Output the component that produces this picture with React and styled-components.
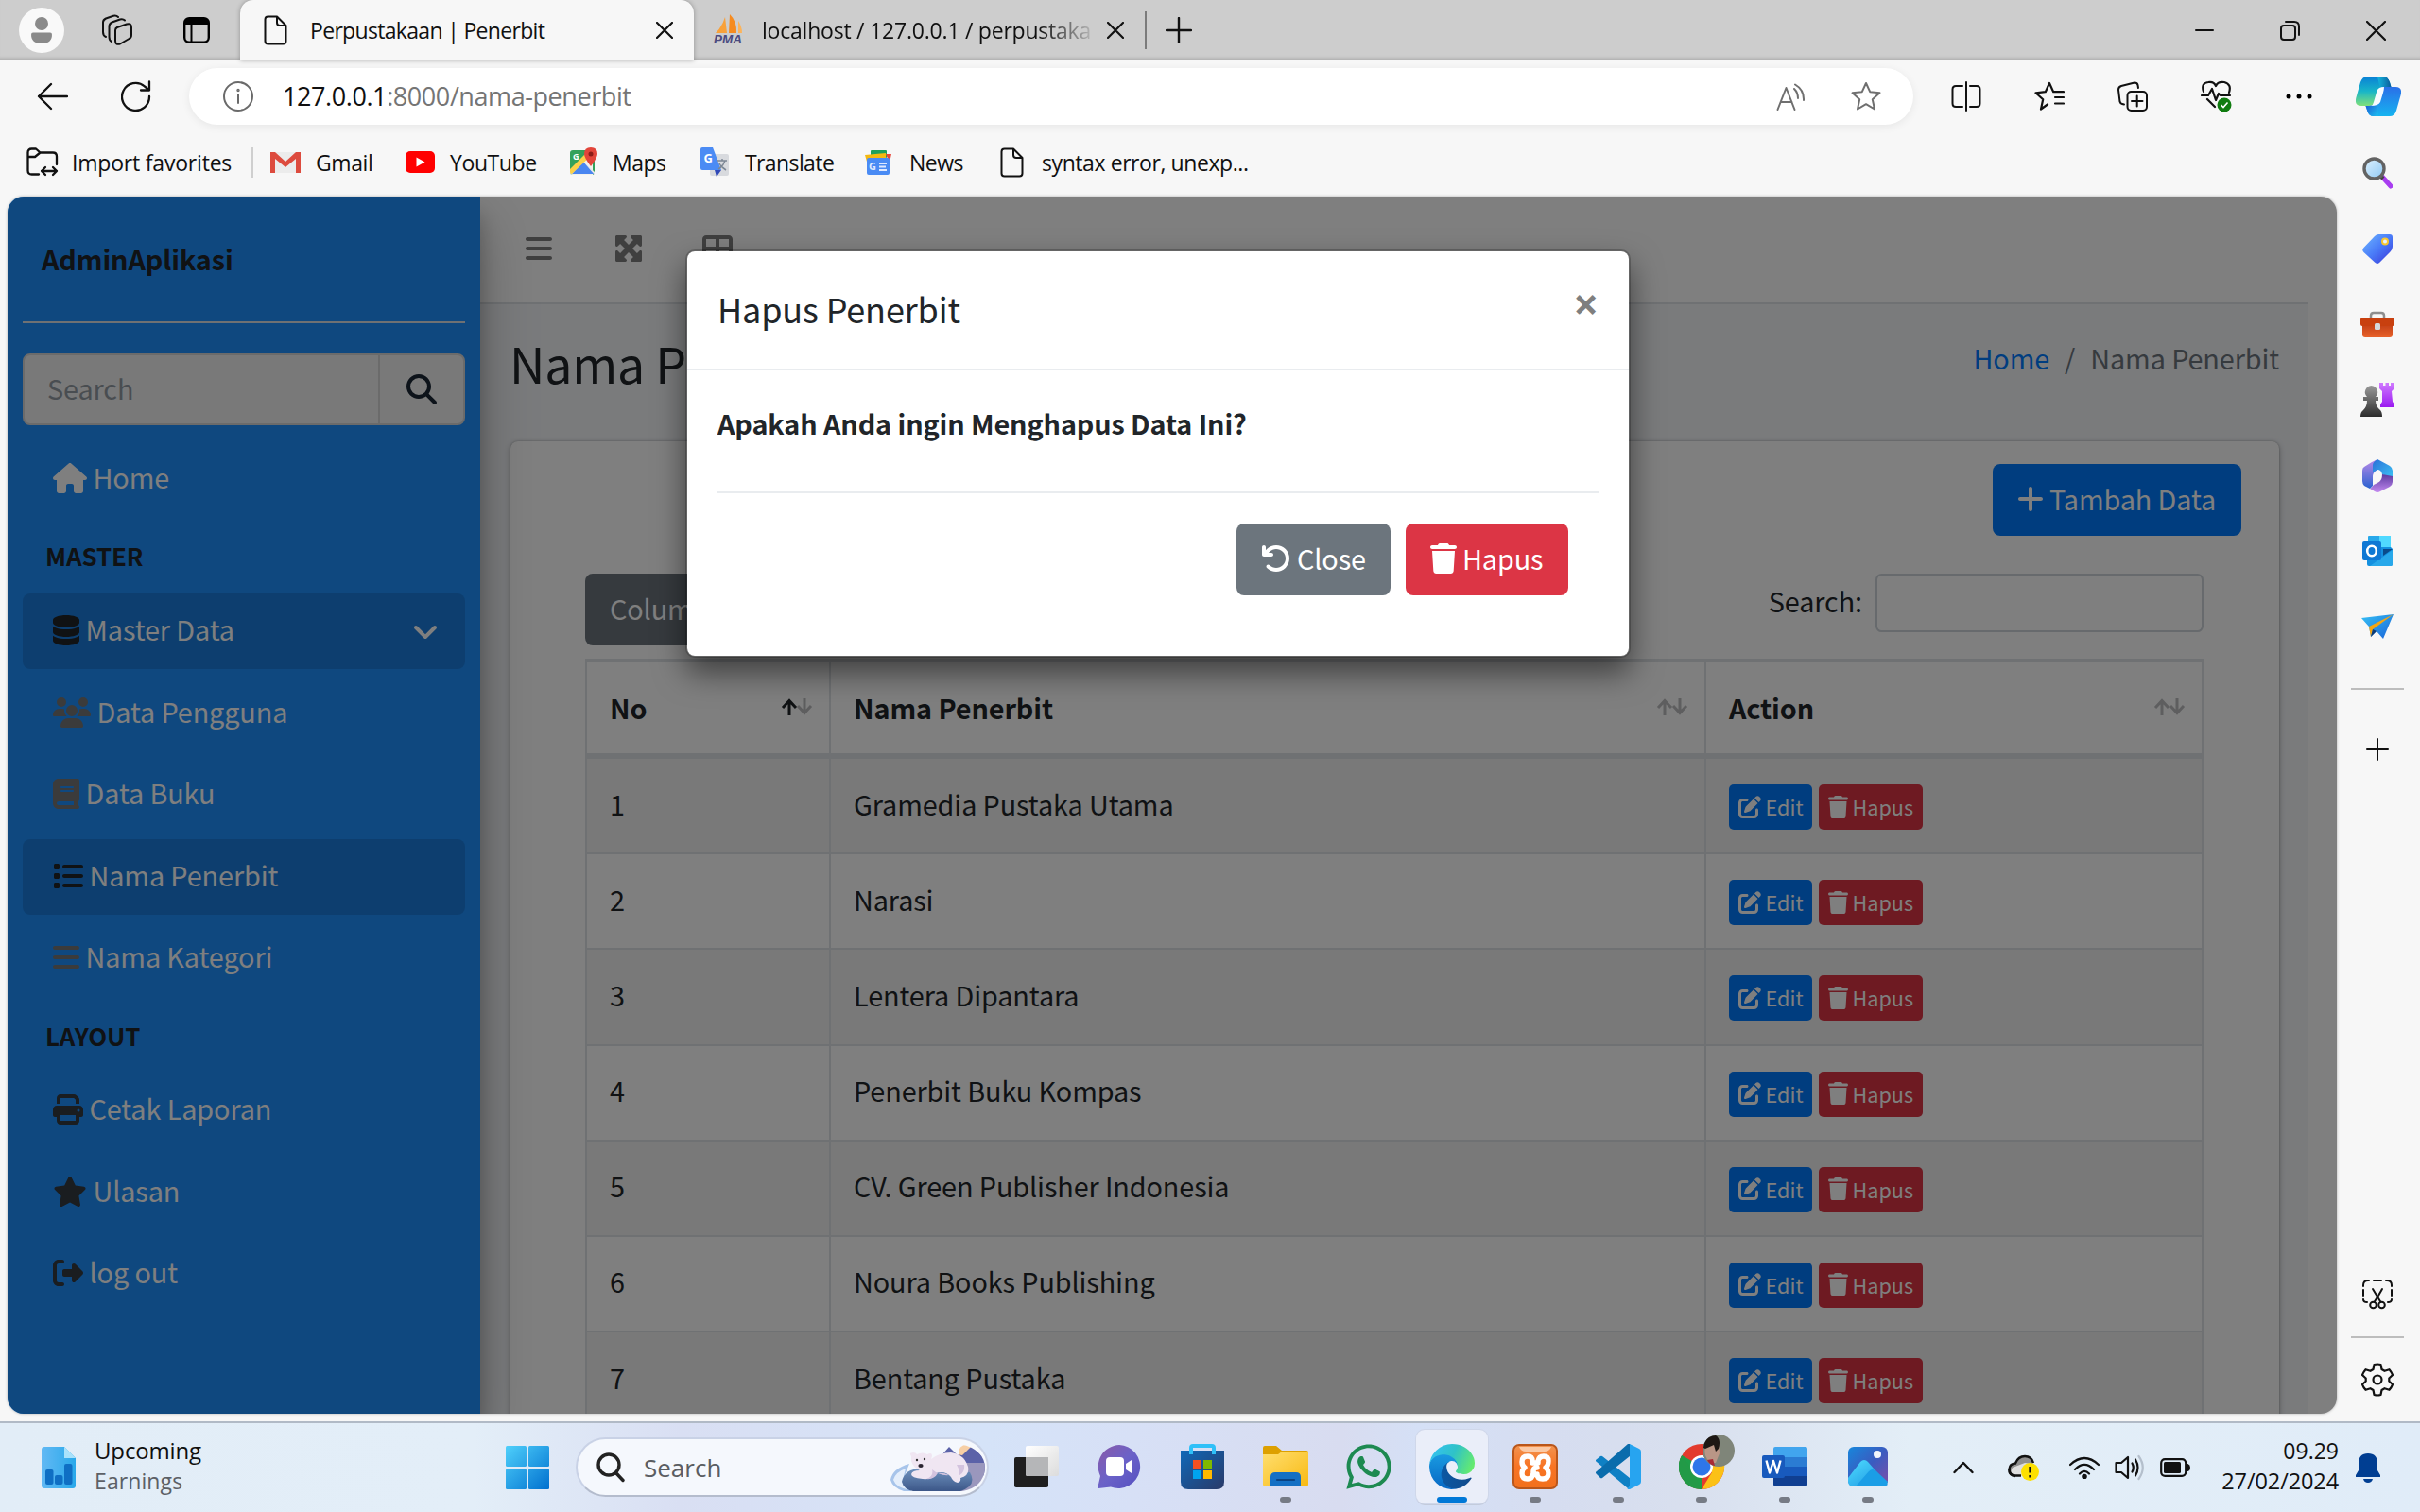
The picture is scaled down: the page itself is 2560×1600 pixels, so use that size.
import React from "react";
import styled, { createGlobalStyle, css } from "styled-components";
import {
  FaBars, FaMaximize, FaTableCellsLarge, FaMagnifyingGlass, FaHouse, FaDatabase, FaUsers, FaBook,
  FaList, FaPrint, FaStar, FaRightFromBracket, FaPlus, FaPenToSquare, FaTrash, FaArrowRotateLeft,
  FaAngleDown, FaWhatsapp,
} from "react-icons/fa6";

const Global = createGlobalStyle`
  *, *::before, *::after { box-sizing: border-box; }
  html, body { margin: 0; padding: 0; overflow: hidden; }
  svg { display: block; flex: none; }
`;

const uiFont = css`font-family: "Open Sans", "Noto Sans", sans-serif;`;
const pageFont = css`font-family: "Noto Sans CJK SC", "Noto Sans", sans-serif;`;

/* ---------- browser frame ---------- */

const Screen = styled.div`
  ${uiFont}
  width: 2560px;
  height: 1600px;
  display: flex;
  flex-direction: column;
  overflow: hidden;
  background: #f7f7f7;
  color: #000;
`;

const Label = styled.span`
  font-size: ${(p) => p.$size || 23}px;
  letter-spacing: ${(p) => p.$track || 0}px;
  color: ${(p) => p.$color || "#101010"};
  line-height: 32px;
  white-space: nowrap;
`;

const TabStrip = styled.div`
  height: 64px;
  flex: none;
  display: flex;
  align-items: center;
  background: #cdcdcd;
  box-shadow: inset 0 -5px 4px -4px rgba(0, 0, 0, 0.28);
`;

const StripTools = styled.div`
  width: 254px;
  display: flex;
  align-items: center;
  padding-left: 20px;
`;

const Avatar = styled.div`
  width: 48px;
  height: 48px;
  border-radius: 50%;
  background: #f9f9f9;
  display: flex;
  align-items: center;
  justify-content: center;
`;

const Spaced = styled.div`
  margin-left: ${(p) => p.$left}px;
  flex: none;
`;

const Tab = styled.div`
  height: 64px;
  width: ${(p) => p.$width}px;
  flex: none;
  display: flex;
  align-items: center;
  background: ${(p) => (p.$active ? "#f7f7f7" : "transparent")};
  border-radius: 14px 14px 0 0;
  padding: 0 22px 0 ${(p) => (p.$active ? 25 : 20)}px;
  box-shadow: ${(p) => (p.$active ? "0 0 5px rgba(0,0,0,.3)" : "none")};
`;

const TabTitle = styled.div`
  flex: 1;
  min-width: 0;
  margin-left: ${(p) => p.$left}px;
  display: flex;
  ${(p) => p.$fade && css`mask-image: linear-gradient(90deg, #000 80%, rgba(0, 0, 0, 0.15) 95%);`}
`;

const StripRule = styled.div`
  width: 2px;
  height: 40px;
  background: #7b7b7b;
  margin-right: 20px;
`;

const WindowButtons = styled.div`
  margin-left: auto;
  display: flex;
  align-items: center;
  gap: 70px;
  padding-right: 36px;
`;

const Toolbar = styled.div`
  height: 76px;
  flex: none;
  display: flex;
  align-items: center;
  padding-left: 39px;
`;

const AddressBar = styled.div`
  margin-left: 40px;
  width: 1824px;
  height: 60px;
  border-radius: 30px;
  background: #fff;
  box-shadow: 0 2px 10px rgba(0, 0, 0, 0.07);
  display: flex;
  align-items: center;
  padding: 0 34px 0 36px;
`;

const Path = styled.span`color: #757575;`;

const AddressActions = styled.div`
  margin-left: auto;
  display: flex;
  align-items: center;
  gap: 48px;
`;

const ToolbarIcons = styled.div`
  margin-left: 40px;
  display: flex;
  align-items: center;
  gap: 56px;
`;

const Body = styled.div`
  height: 1364px;
  flex: none;
  display: flex;
`;

const LeftPane = styled.div`
  width: 2472px;
  display: flex;
  flex-direction: column;
`;

const FavoritesBar = styled.div`
  height: 63px;
  margin-bottom: 1px;
  flex: none;
  display: flex;
  align-items: center;
  padding-left: 28px;
`;

const Favorite = styled.div`
  display: flex;
  align-items: center;
  gap: ${(p) => p.$gap}px;
  width: ${(p) => p.$width}px;
  flex: none;
`;

const FavRule = styled.div`
  width: 2px;
  height: 32px;
  background: #cfcfcf;
  margin-right: 18px;
`;

const EdgeRail = styled.div`
  width: 88px;
  padding: 3px 2px 14px 0;
  display: flex;
  flex-direction: column;
  align-items: center;
`;

const RailSlot = styled.div`
  height: ${(p) => p.$h || 80}px;
  display: flex;
  align-items: center;
  justify-content: center;
`;

const RailRule = styled.div`
  width: 56px;
  height: 2px;
  background: #bdbdbd;
  margin: ${(p) => p.$m || "25px 0 23px"};
`;

const Grow = styled.div`flex: 1;`;

/* ---------- web page ---------- */

const Viewport = styled.div`
  ${pageFont}
  position: relative;
  margin: 4px 0 0 8px;
  width: 2464px;
  height: 1288px;
  border-radius: 17px;
  overflow: hidden;
  display: flex;
  background: #fff;
  font-size: 28.8px;
  letter-spacing: -0.1px;
  color: #212529;
  box-shadow: 0 0 3px rgba(0, 0, 0, 0.3);
`;

const SideNav = styled.nav`
  width: 500px;
  flex: none;
  background: #1e90ff;
  padding: 0 16px;
  z-index: 1;
  box-shadow: 0 28px 56px rgba(0, 0, 0, 0.25), 0 20px 20px rgba(0, 0, 0, 0.22);
`;

const Brand = styled.div`
  height: 134px;
  border-bottom: 2px solid #dee2e6;
  padding: 42px 0 0 20px;
  line-height: 48px;
  font-weight: 700;
`;

const SearchForm = styled.div`
  height: 76px;
  margin: 32px 0 17px;
  display: flex;
  border: 2px solid #d6d6d6;
  border-radius: 8px;
  background: #f2f2f2;
`;

const SearchInput = styled.div`
  flex: 1;
  padding: 11px 0 0 24px;
  line-height: 48px;
  color: #939ba2;
`;

const SearchButton = styled.div`
  width: 90px;
  border-left: 2px solid #d6d6d6;
  display: flex;
  align-items: center;
  justify-content: center;
  color: #1a2634;
`;

const NavItem = styled.a`
  height: 80px;
  margin-bottom: 6.4px;
  padding: 0 30px 0 32px;
  border-radius: 8px;
  display: flex;
  align-items: center;
  color: #fff;
  background: ${(p) => (p.$active ? "rgba(0,0,0,.13)" : "transparent")};
`;

const NavIcon = styled.span`
  width: ${(p) => p.$w}px;
  margin-right: 6.5px;
  margin-bottom: 2px;
  color: ${(p) => p.$color};
  svg { width: ${(p) => p.$w}px; height: 32px; }
`;

const NavText = styled.span`
  line-height: 44px;
  padding-bottom: 4px;
  white-space: nowrap;
`;

const NavArrow = styled.span`
  margin-left: auto;
  margin-right: -4px;
`;

const NavHeader = styled.div`
  height: 75px;
  padding: ${(p) => p.$top}px 0 0 24px;
  font-size: 25.9px;
  line-height: 45px;
  font-weight: 700;
`;

const Main = styled.main`
  width: 1934px;
  flex: none;
  display: flex;
  flex-direction: column;
  background: #f4f6f9;
`;

const TopNav = styled.div`
  height: 114px;
  flex: none;
  display: flex;
  gap: 62.500px;
  padding: 39px 0 0 46px;
  background: #fff;
  border-bottom: 2px solid #dee2e6;
  color: #7f7f7f;
`;

const TopIcon = styled.span`
  width: 32px;
  height: 32px;
  display: flex;
  justify-content: center;
`;

const PageHeader = styled.div`
  height: 145px;
  flex: none;
  display: flex;
  justify-content: space-between;
  padding: 0 31px;
`;

const Heading = styled.h1`
  margin: 24px 0 0;
  font-size: 51.8px;
  font-weight: 400;
  letter-spacing: -0.2px;
  line-height: 76px;
`;

const Breadcrumb = styled.div`
  margin-top: 33px;
  display: flex;
  gap: 16px;
  line-height: 48px;
  color: #6c757d;
`;

const Crumb = styled.a`color: #007bff;`;

const Card = styled.section`
  margin: 0 31px 0 32px;
  flex: 1;
  padding: 24px 40px 0;
  background: #fff;
  border-radius: 8px 8px 0 0;
  box-shadow: 0 0 2px rgba(0, 0, 0, 0.25), 0 2px 6px rgba(0, 0, 0, 0.3);
`;

const CardTools = styled.div`
  display: flex;
  justify-content: flex-end;
  margin-bottom: 40px;
`;

const tones = { primary: "#007bff", danger: "#dc3545", secondary: "#6c757d" };

const Button = styled.button`
  height: 76px;
  width: ${(p) => p.$width}px;
  padding: 0 0 0 26px;
  border: 0;
  border-radius: 8px;
  background: ${(p) => tones[p.$tone]};
  color: #fff;
  font: inherit;
  letter-spacing: inherit;
  display: flex;
  align-items: center;
  svg { width: ${(p) => p.$icon}px; height: 32px; margin: 0 6px 2px 0; }
`;

const ButtonText = styled.span`
  line-height: 45px;
  padding-bottom: 3px;
  white-space: nowrap;
`;

const TableArea = styled.div`padding: 0 40px 0 39px;`;

const TableTools = styled.div`
  height: 90px;
  display: flex;
  justify-content: space-between;
`;

const Filter = styled.label`
  display: flex;
  gap: 14px;
  line-height: 48px;
`;

const FilterText = styled.span`padding-top: 5px;`;

const FilterInput = styled.span`
  width: 347px;
  height: 62px;
  border: 2px solid #ced4da;
  border-radius: 6.4px;
`;

const Grid = styled.div`
  border: 2px solid #dee2e6;
  border-top-width: 4px;
  border-bottom: 0;
`;

const Row = styled.div`
  display: grid;
  grid-template-columns: 258px 926px 1fr;
  height: ${(p) => (p.$head ? 102 : 101.2)}px;
  border-bottom: ${(p) => (p.$head ? 6 : 2)}px solid #dee2e6;
  background: ${(p) => (p.$odd ? "#f2f2f2" : "#fff")};
  font-weight: ${(p) => (p.$head ? 700 : 400)};
`;

const Cell = styled.div`
  padding: ${(p) => p.$top || 23.500}px 8px 0 24px;
  line-height: 48px;
  display: flex;
  justify-content: ${(p) => (p.$between ? "space-between" : "flex-start")};
  gap: 7px;
  border-right: 2px solid #dee2e6;
  &:last-child { border-right: 0; }
`;

const SortMark = styled.span`padding: 14.500px 9px 0 0;`;

const SmallButton = styled.button`
  height: 48px;
  width: ${(p) => p.$width}px;
  border: 0;
  border-radius: 5px;
  padding: 0 0 0 9.600px;
  background: ${(p) => tones[p.$tone]};
  color: #fff;
  font: inherit;
  font-size: 21.6px;
  letter-spacing: 0;
  display: flex;
  align-items: center;
  gap: 5px;
  svg { width: ${(p) => p.$icon}px; height: 24px; margin-bottom: 1px; }
`;

const SmallText = styled.span`
  line-height: 33px;
  padding-bottom: 1px;
`;

const Backdrop = styled.div`
  position: absolute;
  inset: 0;
  z-index: 2;
  background: rgba(0, 0, 0, 0.5);
  display: flex;
  align-items: flex-start;
  justify-content: center;
  padding: 56px 30px 0 0;
`;

const Dialog = styled.div`
  width: 1000px;
  height: 432px;
  background: #fff;
  background-clip: padding-box;
  border: 2px solid rgba(0, 0, 0, 0.2);
  border-radius: 10px;
  box-shadow: 0 16px 32px rgba(0, 0, 0, 0.5);
`;

const DialogHead = styled.div`
  height: 126px;
  padding: 30px 32px 0;
  border-bottom: 2px solid #e9ecef;
  display: flex;
  justify-content: space-between;
`;

const DialogTitle = styled.h4`
  margin: 0;
  font-size: 36px;
  font-weight: 400;
  letter-spacing: -0.15px;
  line-height: 60px;
`;

const Dismiss = styled.span`
  ${uiFont}
  font-size: 47px;
  font-weight: 700;
  line-height: 48px;
  padding-top: 1px;
  color: #7f7f7f;
`;

const DialogBody = styled.div`padding: 32px 32px 0;`;

const Question = styled.p`
  margin: 0 0 48px;
  font-weight: 700;
  line-height: 48px;
`;

const DialogActions = styled.div`
  border-top: 2px solid #e9ecef;
  padding: 32px 32px 0 0;
  display: flex;
  justify-content: flex-end;
  gap: 16px;
`;

/* ---------- taskbar ---------- */

const Taskbar = styled.footer`
  height: 96px;
  flex: none;
  border-top: 2px solid #b1bac6;
  display: flex;
  align-items: center;
  background: linear-gradient(90deg, #e2edf7 0, #e3eef8 500px, #d9dff3 720px, #d5e3f8 1040px, #d7e0f6 1200px, #d8dcf0 1420px, #d5e0f6 1500px, #d6ddf0 1640px, #d8dfee 1780px, #e3eef7 2020px, #e0ecf8 2560px);
`;

const Widget = styled.div`
  width: 535px;
  padding-left: 44px;
  display: flex;
  align-items: center;
  gap: 20px;
`;

const Lines = styled.div`
  display: flex;
  flex-direction: column;
  align-items: ${(p) => (p.$end ? "flex-end" : "flex-start")};
  width: ${(p) => (p.$w ? p.$w + "px" : "auto")};
  margin-top: -4px;
`;

const TaskSearch = styled.div`
  margin: 0 6px 0 28px;
  width: 437px;
  height: 63px;
  margin-top: -1px;
  border-radius: 32px;
  border: 2px solid #c9d2e6;
  border-bottom-color: #b4bccd;
  background: #f5f8fd;
  display: flex;
  align-items: center;
  gap: 20px;
  padding: 0 0 0 20px;
`;

const AppSlot = styled.div`
  width: 88px;
  height: 94px;
  flex: none;
  display: flex;
  align-items: center;
  justify-content: center;
`;

const AppTile = styled.div`
  position: relative;
  width: 76px;
  height: 78px;
  margin-bottom: 2px;
  border-radius: 9px;
  display: flex;
  align-items: center;
  justify-content: center;
  background: ${(p) => (p.$active ? "#eaeef9" : "transparent")};
  box-shadow: ${(p) => (p.$active ? "0 0 0 1px #cfd7ea, 0 2px 0 #c3cbdc" : "none")};
`;

const RunMark = styled.i`
  position: absolute;
  bottom: 1px;
  width: ${(p) => (p.$wide ? 32 : 12)}px;
  height: 6px;
  border-radius: 3px;
  background: ${(p) => (p.$wide ? "#0078d7" : "#767b85")};
`;

const ChromeShift = styled.div`margin: -10px 0 0 11px;`;

const Tray = styled.div`
  margin-left: 46px;
  display: flex;
  align-items: center;
`;

/* ---------- drawings ---------- */

const Line = ({ w = 32, h = 32, c = "#111", sw = 2, children }) => (
  <svg width={w} height={h} viewBox={`0 0 ${w} ${h}`} fill="none" stroke={c} strokeWidth={sw} strokeLinecap="round" strokeLinejoin="round">{children}</svg>
);
const Solid = ({ w = 48, h = 48, box, children }) => (
  <svg width={w} height={h} viewBox={box || `0 0 ${w} ${h}`}>{children}</svg>
);
const Lin = ({ id, a, b, m, x2 = 1, y2 = 1 }) => (
  <linearGradient id={id} x1="0" y1="0" x2={x2} y2={y2}>
    <stop offset="0" stopColor={a} />
    {m && <stop offset=".5" stopColor={m} />}
    <stop offset="1" stopColor={b} />
  </linearGradient>
);

const DocIcon = () => <Line w={25} h={32}><path d="M4.500 1.500H14L23.500 11V27.500Q23.500 30.500 20.500 30.500H4.500Q1.500 30.500 1.500 27.500V4.500Q1.500 1.500 4.500 1.500ZM14 1.500V8Q14 11 17 11H23.500" /></Line>;
const CloseIcon = ({ s = 18, sw = 2.200 }) => <Line w={s} h={s} sw={sw}><path d={`M1 1L${s - 1} ${s - 1}M${s - 1} 1L1 ${s - 1}`} /></Line>;
const PersonIcon = () => <Solid w={24} h={28}><circle cx="12" cy="7" r="7" fill="#8a8a8a" /><path d="M1 18.500Q1 16.500 3 16.500H21Q23 16.500 23 18.500Q23 28 12 28Q1 28 1 18.500Z" fill="#8a8a8a" /></Solid>;
const WorkspacesIcon = () => (
  <Line w={34} h={34}>
    <path d="M17 14L27 10.500Q32 9 32 14V22Q32 25 29.500 26L20 31.500Q15 33 15 28V17Q15 15 17 14Z" />
    <path d="M11 29Q8.500 28 8.500 24V13Q8.500 10 11.500 8.500L20 5.500Q23 4.500 25 6.500" />
    <path d="M5 24Q2 23 2 19V8.500Q2 6 5 4.500L13 1.800Q16 1 18 3" />
  </Line>
);
const PanesIcon = () => <Solid w={28} h={28}><rect x="1.200" y="1.200" width="25.600" height="25.600" rx="5" fill="none" stroke="#000" strokeWidth="2.400" /><path d="M1 8V6Q1 1 6 1H22Q27 1 27 6V8Z" /><path d="M8.500 8V27" stroke="#000" strokeWidth="2" /></Solid>;
const PmaIcon = () => (
  <Solid w={34} h={34}>
    <path d="M13 3L15 20H3Q10 13 13 3Z" fill="#f8a13a" /><path d="M18 0Q26 8 25 20H17Z" fill="#f68b1f" /><path d="M27 7Q31 13 31 20H27Z" fill="#fbb45c" />
    <text x="1" y="31" fontFamily="Liberation Sans" fontWeight="700" fontStyle="italic" fontSize="12" textLength="30" lengthAdjust="spacingAndGlyphs" fill="#4a4a80">PMA</text>
  </Solid>
);
const BackIcon = () => <Line w={33} h={30} sw={2.300}><path d="M32 15H2M15 2L2 15L15 28" /></Line>;
const ReloadIcon = () => <Line w={32} h={34} sw={2.300}><path d="M30 17A14.500 14.500 0 1 1 25 6.500L29.500 10M30 1.500V10.500H21" /></Line>;
const InfoIcon = () => <Line w={32} h={32} c="#6a6a6a"><circle cx="16" cy="16" r="15" /><path d="M16 14V23" /><circle cx="16" cy="9.500" r=".7" /></Line>;
const ReadIcon = () => <Line w={31} h={29} c="#6f6f6f"><path d="M1.500 28L10.500 5L19.500 28M5 20H16.500M19 6Q23 10 23 16M20 1.500Q29.500 7 29 18" /></Line>;
const starPath = "M16 2L20.200 11.200L30.500 12.300L22.800 19.200L25 29.500L16 24.200L7 29.500L9.200 19.200L1.500 12.300L11.800 11.200Z";
const StarIcon = () => <Line c="#6f6f6f"><path d={starPath} /></Line>;
const SplitIcon = () => <Line w={32} h={32}><path d="M12 5H5Q1.500 5 1.500 8.500V23.500Q1.500 27 5 27H12M20 5H27Q30.500 5 30.500 8.500V23.500Q30.500 27 27 27H20M16 1V31" /></Line>;
const FavIcon = () => <Line sw={2.200}><path d="M14 24.500L7 29.500L9.200 19.200L1.500 12.300L11.800 11.200L16 2L20.200 11.200H31M22 17H31M22 23.500H31" /></Line>;
const CollectIcon = () => <Line><path d="M7 24.500L5 24Q3 23.500 2.500 21.500L1 9Q1 6 4 5L18 1.500Q21 1.500 21.500 4L22 7" /><rect x="10.500" y="11" width="20.500" height="20" rx="4" /><path d="M20.700 15.500V26.500M15 21H26.500" /></Line>;
const HealthIcon = () => (
  <Solid w={34} h={34}>
    <path d="M3 12Q0 3 8 2Q14 1 16 6Q18 1 25 2Q33 4 30 13M1 16H8L12 9L16 21L19 14L21 16H31M7 20L15 28" fill="none" stroke="#111" strokeWidth="2.200" strokeLinejoin="round" strokeLinecap="round" />
    <circle cx="25" cy="26" r="7.500" fill="#107c10" /><path d="M21.500 26L24 28.500L28.500 23.500" fill="none" stroke="#fff" strokeWidth="1.600" />
  </Solid>
);
const DotsIcon = () => <Solid w={28} h={6}><circle cx="3" cy="3" r="2.500" /><circle cx="14" cy="3" r="2.500" /><circle cx="25" cy="3" r="2.500" /></Solid>;
const CopilotIcon = () => (
  <Solid w={48} h={42}>
    <defs><Lin id="cpA" a="#0a7fd6" m="#18b5c8" b="#7fe07a" x2={0} /><Lin id="cpB" a="#2a6fe8" b="#16b4f0" x2={0} /><Lin id="cpC" a="#1a4bd0" b="#1cc0f0" /><Lin id="cpD" a="#14b8e0" b="#0a5a9a" x2={1} y2={0} /></defs>
    <path d="M12 0H29Q34 0 36 6L37.500 11H30Q25 11 23.500 16L20 28Q18.500 31 14 31H6Q-2 31 .5 22L5 6Q7 0 12 0Z" fill="url(#cpA)" />
    <path d="M23 0H29Q34 0 36 6L37.500 11H30Q27 11 26 13Z" fill="url(#cpD)" />
    <path d="M36 42H19Q14 42 12.500 37L10.500 31H14Q18.500 31 20 28L24.500 16Q26 11 30 11H42Q50 11 47.500 20L43 36Q41 42 36 42Z" fill="url(#cpB)" />
    <path d="M10.500 31H14Q18.500 31 20 28L21 25Q25 36 23 42H19Q14 42 12.500 37Z" fill="url(#cpC)" />
    <path d="M19 27L22.500 15Q24 11 30 11Q30 13 29 17L26 27Q24 31 16 31Q18.500 30 19 27Z" fill="#f7fbff" />
  </Solid>
);
const ImportIcon = () => <Line w={34} h={32} sw={2.300}><path d="M13 28.500H5.500Q1.500 28.500 1.500 24.500V5.500Q1.500 1.500 5.500 1.500H10L14.500 5.500H28Q32 5.500 32 9.500V18M1.500 10H9L14.500 5.500M16 25H32M20 21L16 25L20 29M28 21L32 25L28 29" /></Line>;
const GmailIcon = () => <Solid w={32} h={24}><rect x="1" y="1" width="30" height="22" fill="#ececec" /><path d="M0 23V1H5L16 11L27 1H32V23H27V8L16 17L5 8V23Z" fill="#dd4b3e" /></Solid>;
const YoutubeIcon = () => <Solid w={31} h={23}><rect width="31" height="23" rx="5" fill="#f00" /><path d="M11.500 6.500L20.500 11.500L11.500 16.500Z" fill="#fff" /></Solid>;
const MapsIcon = () => (
  <Solid w={31} h={31}>
    <rect x="1" y="3" width="26" height="26" rx="3" fill="#34a15a" /><path d="M1 26L25 3V29H4Q1 29 1 26Z" fill="#f3f1ec" /><path d="M3 28L15 15L27 28Z" fill="#4a86f0" /><path d="M1 23L20 4L24 8L3 28Q1 28 1 26Z" fill="#fbd04a" /><path d="M15 15L27 26V29Z" fill="#e8e8e8" />
    <path d="M23 0Q30 0 30 7Q30 11 23 20Q16 11 16 7Q16 0 23 0Z" fill="#e2453a" /><circle cx="23" cy="7" r="2.500" fill="#8c1d18" /><text x="4" y="13" fontSize="9" fontFamily="Open Sans" fontWeight="700" fill="#fff">G</text>
  </Solid>
);
const TranslateIcon = () => (
  <Solid w={31} h={31}>
    <rect x="10" y="7" width="20" height="23" rx="2" fill="#d8dade" /><path d="M15 24H22L17 31Z" fill="#3049b8" /><path d="M2 0H13L22 24H2Q0 24 0 22V2Q0 0 2 0Z" fill="#4b8bf4" />
    <text x="3.500" y="16" fontSize="13" fontFamily="Open Sans" fontWeight="700" fill="#fff">G</text><path d="M18 14H28M23 12V14M26 14Q24 20 19 23M20 17Q22 21 27 24" stroke="#7c8794" strokeWidth="1.500" fill="none" />
  </Solid>
);
const NewsIcon = () => (
  <Solid w={29} h={26}>
    <rect x="6" y="0" width="17" height="8" rx="1" fill="#1fa05a" /><path d="M0 5L22 3V8L2 12Z" fill="#f5b912" /><path d="M22 4H28L26 13Z" fill="#e8463a" /><rect x="2" y="8" width="24" height="18" rx="2" fill="#4a8bf4" />
    <text x="4" y="21" fontSize="11" fontFamily="Open Sans" fontWeight="700" fill="#dfe9ff">G</text><path d="M15 14H23M15 17.500H22M15 21H23" stroke="#dfe9ff" strokeWidth="1.800" />
  </Solid>
);

const RailSearch = () => <Solid w={32} h={34}><defs><Lin id="rs" a="#dff2ff" b="#8ec8f4" /></defs><path d="M21 21L30 31" stroke="#a83df0" strokeWidth="5" strokeLinecap="round" /><path d="M18 19L22 23" stroke="#444" strokeWidth="4" /><circle cx="12.500" cy="12.500" r="10.500" fill="url(#rs)" stroke="#636363" strokeWidth="3.400" /></Solid>;
const RailTag = () => <Solid w={32} h={32}><defs><Lin id="rt" a="#6fb8ff" m="#4a7cf8" b="#3a35d8" /></defs><path d="M17 1H29Q32 1 32 4V14Q32 17 29.500 19.500L18 31Q15.500 33 13 30.500L1.500 20Q-1 17.500 1.500 15L13 3Q15 1 17 1Z" fill="url(#rt)" /><circle cx="24" cy="8.500" r="3" fill="#e8f0ff" stroke="#f8c62c" strokeWidth="2" /></Solid>;
const RailToolbox = () => <Solid w={36} h={28}><defs><Lin id="rb" a="#b5330f" b="#e8622a" x2={0} /></defs><path d="M11 9V5Q11 2 14 2H22Q25 2 25 5V9" fill="none" stroke="#8e8e8e" strokeWidth="2.500" /><rect x="2" y="9" width="32" height="19" rx="3" fill="url(#rb)" /><path d="M2 7H34Q36 7 36 9V14Q36 16 34 16H2Q0 16 0 14V9Q0 7 2 7Z" fill="#c8400f" /><rect x="15" y="13" width="6" height="7" rx="1.500" fill="#d4d9dd" /></Solid>;
const RailChess = () => (
  <Solid w={36} h={36}>
    <defs><Lin id="c1" a="#9a9a9a" b="#2c2c2c" x2={0} /><Lin id="c2" a="#d07bff" b="#9a1af0" x2={0} /></defs>
    <path d="M20 0H24V3H26.500V0H30V3H32V0H36V6L33 9L34 20L36 23V26H21V23L23 20V9L20 6Z" fill="url(#c2)" />
    <path d="M11.500 3A7 7 0 0 1 16 15H19V19H16Q16 25 21 29Q23 31 23 36H0Q0 31 3 29Q7 25 7 19H3V15H7A7 7 0 0 1 11.500 3Z" fill="url(#c1)" />
  </Solid>
);
const RailM365 = () => (
  <Solid w={32} h={35}>
    <defs><Lin id="m1" a="#b98ae8" b="#2a62d0" x2={0} /><Lin id="m2" a="#2a6fd8" b="#3cc4f4" /><Lin id="m3" a="#5a3aa0" b="#c48af0" x2={0} /></defs>
    <path d="M10 3L16 0V11Q11 14 11 18V28L8 31L2 28Q0 26 0 23V12Q0 9 2 8Z" fill="url(#m1)" /><path d="M16 0L29 7Q32 9 32 12V21L21 16Q20 11 16 11L11 14V6Q11 3 16 0Z" fill="url(#m2)" /><path d="M32 18V24Q32 27 29 29L19 34Q16 36 13 34L8 31Q10 30 12 27L16 25Q21 23 21 16Z" fill="url(#m3)" />
  </Solid>
);
const RailOutlook = () => <Solid w={32} h={32}><rect x="6" y="0" width="24" height="16" rx="1" fill="#28a8ea" /><rect x="18" y="0" width="12" height="14" fill="#50d9ff" /><path d="M5 12H30L32 14V30Q32 32 30 32H7Q5 32 5 30Z" fill="#1490df" /><path d="M32 15L8 32H30Q32 32 32 30Z" fill="#28a8ea" /><path d="M32 14L22 21V14Z" fill="#0a4a8a" /><rect x="0" y="6" width="20" height="20" rx="2" fill="#0f78d4" /><ellipse cx="10" cy="16" rx="4.800" ry="5.200" fill="none" stroke="#fff" strokeWidth="2.600" /></Solid>;
const RailPlane = () => <Solid w={34} h={26}><defs><Lin id="rp" a="#35c0f5" b="#1a63d8" /></defs><path d="M0 4L34 0L23 26L16 18L10 24L8 13Z" fill="url(#rp)" /><path d="M8 13L34 0L12 16L10 24Z" fill="#f5a613" /><path d="M12 16L16 18L10 24Z" fill="#0c3b78" /></Solid>;
const PlusIcon = ({ s = 24, sw = 2 }) => <Line w={s} h={s} sw={sw}><path d={`M${s / 2} 1V${s - 1}M1 ${s / 2}H${s - 1}`} /></Line>;
const SnipIcon = () => <Line w={32} h={32} sw={2}><path d="M1 7V6Q1 1 6 1H7M12 1H20M25 1H26Q31 1 31 6V7M31 11V17M1 11V17M31 21Q31 24 27 24M1 21Q1 24 5 24" /><path d="M11 10L19.500 24M21 10L17 17L12.500 24" /><circle cx="11.500" cy="27" r="3.300" /><circle cx="20.500" cy="27" r="3.300" /></Line>;
const GearIcon = () => <Line w={34} h={36} sw={2.200}><path d="M13.500 2Q17 1 20.500 2L21.500 7L24.500 8.800L29.500 7.200Q32 10 33 13L29.300 16.500V19.500L33 23Q32 26 29.500 28.800L24.500 27.200L21.500 29L20.500 34Q17 35 13.500 34L12.500 29L9.500 27.200L4.500 28.800Q2 26 1 23L4.700 19.500V16.500L1 13Q2 10 4.500 7.200L9.500 8.800L12.500 7Z" /><circle cx="17" cy="18" r="4.500" /></Line>;
const SortIcon = ({ up }) => (
  <svg width="34" height="18" viewBox="0 0 34 18" fill="none" strokeWidth="3">
    <path d="M9 18V2.500M2 10L9 2.500L16 10" stroke={up ? "#212529" : "#bcbdbf"} /><path d="M25 0V15.500M18 8L25 15.500L32 8" stroke="#bcbdbf" />
  </svg>
);

const ReportIcon = () => <Solid w={36} h={44}><defs><Lin id="rep" a="#62b9f4" b="#29a8ea" y2={0} /></defs><path d="M3 0H24L36 12V41Q36 44 33 44H3Q0 44 0 41V3Q0 0 3 0Z" fill="url(#rep)" /><path d="M24 0L36 12H24Z" fill="#a9e2fb" /><rect x="4" y="24" width="8.500" height="16" rx="2" fill="#0f6fc4" /><rect x="14" y="30" width="8.500" height="10" rx="2" fill="#0f6fc4" /><rect x="24" y="18" width="8.500" height="22" rx="2" fill="#0f6fc4" /></Solid>;
const StartIcon = () => <Solid w={46} h={46}><defs><linearGradient id="st" gradientUnits="userSpaceOnUse" x1="0" y1="0" x2="46" y2="46"><stop offset="0" stopColor="#4fd0fb" /><stop offset="1" stopColor="#0070cf" /></linearGradient></defs>{[[0, 0], [24, 0], [0, 24], [24, 24]].map(([x, y]) => <rect key={x + "-" + y} x={x} y={y} width="22" height="22" rx="1.500" fill="url(#st)" />)}</Solid>;
const FindIcon = () => <Line w={30} h={32} c="#222" sw={3.400}><circle cx="13" cy="13" r="11" /><path d="M21 22L28 29.500" /></Line>;
const BearIcon = () => (
  <Solid w={102} h={50}>
    <defs><Lin id="bw" a="#6f93bf" b="#3c5788" x2={0} /><clipPath id="bc"><path d="M0 0H74Q100 6 100 26Q98 46 76 50H0Z" /></clipPath></defs>
    <g clipPath="url(#bc)">
      <circle cx="80" cy="9" r="8" fill="#f7cfa5" /><path d="M46 22L54 12L62 3L70 11L76 12L86 2L102 18V34H46Z" fill="#5b62a8" /><path d="M66 20H102V50H60Z" fill="#9a97bd" />
      <path d="M0 38Q2 26 20 21L14 36L22 50H14Q2 46 0 38Z" fill="#a7c4ea" /><path d="M3 38Q5 30 16 26L13 38L18 48Q6 46 3 38Z" fill="#e4eefb" /><path d="M12 40Q15 26 32 26L84 30Q92 44 74 50H24Q14 48 12 40Z" fill="url(#bw)" />
    </g>
    <path d="M22 13Q19 9 24 9Q27 9 28 11Q34 8 39 11Q44 8 44 13L43 16Q52 9 64 9Q78 11 82 24Q84 34 74 36Q75 40 71 41Q66 40 64 35Q58 28 48 31Q46 38 34 37Q22 36 22 32Q23 28 31 28Q24 25 22 18Z" fill="#f0e6f2" />
    <path d="M44 27Q52 34 62 33Q56 30 50 31Q46 38 38 37Q46 34 44 27ZM70 22Q74 28 72 34Q79 30 78 22Z" fill="#d3c3de" /><circle cx="28" cy="17" r="1.200" fill="#333" /><circle cx="36" cy="16" r="1.200" fill="#333" /><ellipse cx="32" cy="23" rx="2.600" ry="1.900" fill="#2a2430" />
  </Solid>
);
const TaskViewIcon = () => <Solid w={47} h={45}><defs><Lin id="tv" a="#fff" b="#dcdcdc" /></defs><rect x="0" y="12" width="36" height="32" rx="2" fill="#1f1f1f" /><rect x="12" y="0" width="35" height="32" rx="2" fill="url(#tv)" /><path d="M12 12H36V32H14Q12 32 12 30Z" fill="#b5b6b8" /></Solid>;
const ChatIcon = () => <Solid w={46} h={46}><defs><Lin id="ch" a="#8a5aa8" m="#6b62c8" b="#5550c0" /></defs><path d="M23 0A23 23 0 1 1 14 44.500L1 46Q0 46 .5 44L3 33A23 23 0 0 1 23 0Z" fill="url(#ch)" /><rect x="9" y="13" width="19" height="20" rx="4" fill="#fff" /><path d="M30 20L36 16V30L30 26Z" fill="#fff" /></Solid>;
const StoreIcon = () => <Solid w={46} h={48}><defs><Lin id="sto" a="#0f68b8" b="#2a3a68" /></defs><path d="M0 7H46V40Q46 48 38 48H8Q0 48 0 40Z" fill="url(#sto)" /><path d="M11 11V4Q11 2 13 2H33Q35 2 35 4V11" fill="none" stroke="#2fc0f8" strokeWidth="4" /><path d="M13 17H22V26H13Z" fill="#f25022" /><path d="M24 17H33V26H24Z" fill="#7fba00" /><path d="M13 28H22V37H13Z" fill="#00a4ef" /><path d="M24 28H33V37H24Z" fill="#ffb900" /></Solid>;
const FolderIcon = () => <Solid w={48} h={44}><defs><Lin id="fo" a="#ffdf70" b="#f8b912" /></defs><path d="M0 2Q0 0 2 0H14L20 5H46Q48 5 48 7V12H0Z" fill="#dda000" /><path d="M0 9H16L20 6H47Q48 6 48 8V41Q48 43 46 43H2Q0 43 0 41Z" fill="url(#fo)" /><path d="M8 43V33Q8 28 13 28H35Q40 28 40 33V43Z" fill="#1470c4" /><path d="M15 36H33" stroke="#0a4484" strokeWidth="2.200" strokeLinecap="round" /></Solid>;
const EdgeIcon = () => (
  <Solid w={48} h={48} box="0 0 256 256">
    <defs><Lin id="e1" a="#0c59a4" b="#114a8b" y2={0} /><Lin id="e2" a="#1b9de2" b="#0667c4" x2={0} /><linearGradient id="e3" x1="0" y1=".3" x2="1" y2=".6"><stop offset="0" stopColor="#35c1f1" /><stop offset=".5" stopColor="#2fc2c8" /><stop offset="1" stopColor="#66eb6e" /></linearGradient></defs>
    <path d="M231 190.500a93 93 0 0 1-10.500 4.700 101 101 0 0 1-35.700 6.500c-47 0-88-32.400-88-73.900a31.300 31.300 0 0 1 16.400-27.300c-42.600 1.800-53.500 46.200-53.500 72.200 0 73.500 67.800 81 82.400 81 7.900 0 19.700-2.300 26.900-4.600l1.300-.4a128.300 128.300 0 0 0 66.600-52.800 4 4 0 0 0-5.900-5.400z" fill="url(#e1)" />
    <path d="M105.700 241.400a79.200 79.200 0 0 1-22.700-21.300 80.700 80.700 0 0 1 29.500-120c3.200-1.500 8.500-4.100 15.600-4a32.400 32.400 0 0 1 25.700 13 31.900 31.900 0 0 1 6.300 18.700c0-.2 24.500-79.600-80-79.600-43.900 0-80 41.600-80 78.200a130.200 130.200 0 0 0 12.100 56 128 128 0 0 0 156.400 67 75.500 75.500 0 0 1-62.800-8z" fill="url(#e2)" />
    <path d="M152.300 148.900c-.8 1-3.300 2.500-3.300 5.700 0 2.600 1.700 5.100 4.700 7.200 14.400 10 41.500 8.700 41.600 8.700a59.600 59.600 0 0 0 30.300-8.300 61.400 61.400 0 0 0 30.400-53c.3-22.400-8-37.300-11.300-43.900C223.500 23.900 177.700 0 128 0A128 128 0 0 0 0 126.200c.5-36.500 36.800-66 80-66 3.500 0 23.500.3 42 10a72.600 72.600 0 0 1 30.900 29.300c6.100 10.600 7.200 24.100 7.200 29.500s-2.700 13.300-7.800 19.900z" fill="url(#e3)" />
  </Solid>
);
const XamppIcon = () => (
  <Solid>
    <defs><Lin id="xa" a="#f2934f" m="#f87424" b="#f2701c" x2={0} /></defs>
    <rect x="1" y="1" width="46" height="46" rx="6" fill="url(#xa)" stroke="#b9561a" strokeWidth="2" />
    <path d="M7 3H41Q39 8 34 8H14Q9 8 7 3Z" fill="#fbc9a4" />
    <path d="M21 20V18Q21 13 16 13Q10 13 10 19Q10 23 13 25Q10 27 10 31Q10 37 16 37Q21 37 22 31V29Q22 25 26 25M21 20H27M27 20V18Q28 13 33 13Q38 13 38 18Q38 23 35 25Q38 27 38 31Q38 37 32 37Q26 37 26 32" fill="none" stroke="#fff" strokeWidth="5.400" strokeLinecap="round" strokeLinejoin="round" />
  </Solid>
);
const CodeIcon = () => <Solid><path d="M0 17L5 13Q6 12.500 7 13L36 36V47L34 47L1 19Q-.5 18 0 17Z" fill="#0f80c4" /><path d="M0 31L5 36Q6 36.500 7 36L36 13V0H34L1 29Q-.5 30 0 31Z" fill="#0a6cac" /><path d="M36 0L46 5Q48 6 48 8V40Q48 42 46 43L36 48Q34 48 33.500 47.500L36 44Z" fill="#27a4f0" /></Solid>;
const ChromeIcon = () => (
  <Solid w={59} h={58}>
    <circle cx="24" cy="34" r="24" fill="#e33b2e" /><path d="M24 34L3.200 22A24 24 0 0 0 24 58Z" fill="#1f9d48" /><path d="M3.200 22L15 40L24 58A24 24 0 0 1 3.200 22Z" fill="#229a47" /><path d="M24 34L35 40L24 58A24 24 0 0 0 44.800 22H30Z" fill="#fbc116" />
    <circle cx="24" cy="34" r="12" fill="#fff" /><circle cx="24" cy="34" r="9.500" fill="#2e76ea" />
    <circle cx="42" cy="17" r="17" fill="#7f8579" /><path d="M28 22Q26 14 31 8Q38 4 42 8L43 20L39 30Q31 31 28 22Z" fill="#b99686" /><path d="M26 14Q27 2 39 1Q45 5 42 15L39 18L37 11L28 15Z" fill="#1d1714" /><path d="M30 27L36 26L38 33Q32 32 30 27Z" fill="#a82a34" />
  </Solid>
);
const WordIcon = () => <Solid w={48} h={42}><path d="M14 0H46Q48 0 48 2V11H12V2Q12 0 14 0Z" fill="#41a5ee" /><path d="M12 11H48V21H12Z" fill="#2b7cd3" /><path d="M12 21H48V31H12Z" fill="#185abd" /><path d="M12 31H48V40Q48 42 46 42H14Q12 42 12 40Z" fill="#103f91" /><rect x="0" y="9" width="24" height="24" rx="2" fill="#185abd" /><path d="M4.500 14.500L8 27.500L12 15L16 27.500L19.500 14.500" fill="none" stroke="#fff" strokeWidth="2.400" strokeLinejoin="round" /></Solid>;
const PhotosIcon = () => <Solid w={42} h={42}><defs><Lin id="ph" a="#1787dc" m="#3a5cc0" b="#7f4ea8" /><Lin id="pm" a="#4fdcff" b="#1890e0" /></defs><rect width="42" height="42" rx="6" fill="url(#ph)" /><path d="M0 33L13 16Q17 12 21 16L42 40Q40 42 36 42H6Q0 42 0 36Z" fill="url(#pm)" /><path d="M8 42L22 26Q26 22 30 26L42 37Q41 42 36 42Z" fill="#1a9ee6" /><circle cx="31" cy="8" r="4" fill="#f2f6fb" /></Solid>;
const CloudIcon = () => <Solid w={34} h={28}><path d="M8 23Q1 22 1.500 15.500Q2 10 8 9.500Q11 2 18 2Q25 2 27 9" fill="#8f8f8f" stroke="#111" strokeWidth="2.400" /><path d="M8 23Q1 20 5 14L18 9L26 10L18 23Z" fill="#dedede" /><path d="M14 22.500H8Q1 22 1.500 15.500" fill="none" stroke="#111" strokeWidth="2.400" /><circle cx="23.500" cy="18.500" r="9.500" fill="#fde000" /><path d="M23.500 13V19.500M23.500 22V24.500" stroke="#111" strokeWidth="2.400" /></Solid>;
const WifiIcon = () => <Line w={32} h={24} sw={2.200}><path d="M1 9Q16-5 31 9M6 14Q16 4 26 14M11 18.500Q16 13.500 21 18.500" /><circle cx="16" cy="21.500" r="1.700" fill="#111" /></Line>;
const VolumeIcon = () => <Line w={32} h={28} sw={2.200}><path d="M1.500 9H7L14 3V25L7 19H1.500ZM18.500 9.500Q21 14 18.500 18.500M22 5.500Q27 14 22 22.500" /><path d="M25.500 2Q34 14 25.500 26" stroke="#b4bfcc" /></Line>;
const BatteryIcon = () => <Solid w={32} h={20}><rect x="1.200" y="1.200" width="26" height="17.600" rx="4" fill="none" stroke="#111" strokeWidth="2.200" /><rect x="4" y="4" width="18" height="12" rx="1.500" fill="#111" /><path d="M28 6H29.500Q32 7 32 10Q32 13 29.500 14H28Z" fill="#111" /></Solid>;
const BellIcon = () => <Solid w={26} h={31}><path d="M13 0Q23 0 23 11V18L26 23V25H0V23L3 18V11Q3 0 13 0ZM8 27H18Q17 31 13 31Q9 31 8 27Z" fill="#003e92" /></Solid>;

/* ---------- data ---------- */

const publishers = [
  "Gramedia Pustaka Utama", "Narasi", "Lentera Dipantara", "Penerbit Buku Kompas",
  "CV. Green Publisher Indonesia", "Noura Books Publishing", "Bentang Pustaka",
];

const masterLinks = [
  { text: "Master Data", Icon: FaDatabase, w: 28, color: "#212529", active: true, arrow: true },
  { text: "Data Pengguna", Icon: FaUsers, w: 40, color: "#777" },
  { text: "Data Buku", Icon: FaBook, w: 28, color: "#777" },
  { text: "Nama Penerbit", Icon: FaList, w: 32, color: "#212529", active: true },
  { text: "Nama Kategori", Icon: FaBars, w: 28, color: "#777" },
];

const layoutLinks = [
  { text: "Cetak Laporan", Icon: FaPrint, w: 32, color: "#343a40" },
  { text: "Ulasan", Icon: FaStar, w: 36, color: "#343a40" },
  { text: "log out", Icon: FaRightFromBracket, w: 32, color: "#343a40" },
];

const railApps = [RailSearch, RailTag, RailToolbox, RailChess, RailM365, RailOutlook, RailPlane];

const apps = [
  [TaskViewIcon], [ChatIcon], [StoreIcon], [FolderIcon, "run"],
  [() => <FaWhatsapp size={54} color="#1d8a51" />], [EdgeIcon, "active"], [XamppIcon, "run"],
  [CodeIcon, "run"], [ChromeIcon, "run", true], [WordIcon, "run"], [PhotosIcon, "run"],
];

const Link = ({ text, Icon, w, color, active, arrow }) => (
  <NavItem $active={active}>
    <NavIcon $w={w} $color={color}><Icon /></NavIcon>
    <NavText>{text}</NavText>
    {arrow && <NavArrow><FaAngleDown size={32} /></NavArrow>}
  </NavItem>
);

export default function App() {
  return (
    <Screen>
      <Global />
      <TabStrip>
        <StripTools>
          <Avatar><PersonIcon /></Avatar>
          <Spaced $left={39}><WorkspacesIcon /></Spaced>
          <Spaced $left={53}><PanesIcon /></Spaced>
        </StripTools>
        <Tab $active $width={480}>
          <DocIcon />
          <TabTitle $left={24}><Label $track={-0.68}>Perpustakaan | Penerbit</Label></TabTitle>
          <CloseIcon />
        </Tab>
        <Tab $width={477}>
          <PmaIcon />
          <TabTitle $fade $left={18}><Label $track={-0.22}>localhost / 127.0.0.1 / perpustaka</Label></TabTitle>
          <CloseIcon />
        </Tab>
        <StripRule />
        <PlusIcon s={28} sw={2.4} />
        <WindowButtons>
          <Line w={20} h={20}><path d="M1 10H19" /></Line>
          <Line w={21} h={21}><rect x="1" y="5" width="15" height="15" rx="3" /><path d="M6 1H15Q20 1 20 6V15" /></Line>
          <CloseIcon s={21} />
        </WindowButtons>
      </TabStrip>

      <Toolbar>
        <BackIcon />
        <Spaced $left={56}><ReloadIcon /></Spaced>
        <AddressBar>
          <InfoIcon />
          <Spaced $left={31}><Label $size={27} $track={-0.42}>127.0.0.1<Path>:8000/nama-penerbit</Path></Label></Spaced>
          <AddressActions><ReadIcon /><StarIcon /></AddressActions>
        </AddressBar>
        <ToolbarIcons>
          <SplitIcon /><FavIcon /><CollectIcon /><HealthIcon /><DotsIcon />
        </ToolbarIcons>
        <Spaced $left={46}><CopilotIcon /></Spaced>
      </Toolbar>

      <Body>
        <LeftPane>
          <FavoritesBar>
            <Favorite $gap={14} $width={238}><ImportIcon /><Label $track={-0.2}>Import favorites</Label></Favorite>
            <FavRule />
            <Favorite $gap={16} $width={143}><GmailIcon /><Label $track={-0.4}>Gmail</Label></Favorite>
            <Favorite $gap={16} $width={173}><YoutubeIcon /><Label $track={-0.4}>YouTube</Label></Favorite>
            <Favorite $gap={15} $width={139}><MapsIcon /><Label $track={-0.5}>Maps</Label></Favorite>
            <Favorite $gap={16} $width={174}><TranslateIcon /><Label $track={-0.6}>Translate</Label></Favorite>
            <Favorite $gap={18} $width={143}><NewsIcon /><Label $track={-0.5}>News</Label></Favorite>
            <Favorite $gap={19} $width={280}><DocIcon /><Label $track={-0.42}>syntax error, unexp...</Label></Favorite>
          </FavoritesBar>

          <Viewport>
            <SideNav>
              <Brand>AdminAplikasi</Brand>
              <SearchForm>
                <SearchInput>Search</SearchInput>
                <SearchButton><FaMagnifyingGlass size={32} /></SearchButton>
              </SearchForm>
              <Link text="Home" Icon={FaHouse} w={36} color="#fff" />
              <NavHeader $top={12}>MASTER</NavHeader>
              {masterLinks.map((l) => <Link key={l.text} {...l} />)}
              <NavHeader $top={13}>LAYOUT</NavHeader>
              {layoutLinks.map((l) => <Link key={l.text} {...l} />)}
            </SideNav>

            <Main>
              <TopNav>
                <TopIcon><FaBars size={32} /></TopIcon>
                <TopIcon><FaMaximize size={32} /></TopIcon>
                <TopIcon><FaTableCellsLarge size={32} /></TopIcon>
              </TopNav>
              <PageHeader>
                <Heading>Nama Penerbit</Heading>
                <Breadcrumb><Crumb>Home</Crumb><span>/</span><span>Nama Penerbit</span></Breadcrumb>
              </PageHeader>
              <Card>
                <CardTools>
                  <Button $tone="primary" $width={263} $icon={28}><FaPlus /><ButtonText>Tambah Data</ButtonText></Button>
                </CardTools>
                <TableArea>
                  <TableTools>
                    <Button $tone="secondary" $width={290}><ButtonText>Column visibility</ButtonText></Button>
                    <Filter><FilterText>Search:</FilterText><FilterInput /></Filter>
                  </TableTools>
                  <Grid>
                    <Row $head>
                      <Cell $between>No<SortMark><SortIcon up /></SortMark></Cell>
                      <Cell $between>Nama Penerbit<SortMark><SortIcon /></SortMark></Cell>
                      <Cell $between>Action<SortMark><SortIcon /></SortMark></Cell>
                    </Row>
                    {publishers.map((name, i) => (
                      <Row key={name} $odd={i % 2 === 0}>
                        <Cell>{i + 1}</Cell>
                        <Cell>{name}</Cell>
                        <Cell $top={27}>
                          <SmallButton $tone="primary" $width={88} $icon={24}><FaPenToSquare /><SmallText>Edit</SmallText></SmallButton>
                          <SmallButton $tone="danger" $width={110} $icon={21}><FaTrash /><SmallText>Hapus</SmallText></SmallButton>
                        </Cell>
                      </Row>
                    ))}
                  </Grid>
                </TableArea>
              </Card>
            </Main>

            <Backdrop>
              <Dialog>
                <DialogHead>
                  <DialogTitle>Hapus Penerbit</DialogTitle>
                  <Dismiss>×</Dismiss>
                </DialogHead>
                <DialogBody>
                  <Question>Apakah Anda ingin Menghapus Data Ini?</Question>
                  <DialogActions>
                    <Button $tone="secondary" $width={163} $icon={32}><FaArrowRotateLeft /><ButtonText>Close</ButtonText></Button>
                    <Button $tone="danger" $width={172} $icon={28}><FaTrash /><ButtonText>Hapus</ButtonText></Button>
                  </DialogActions>
                </DialogBody>
              </Dialog>
            </Backdrop>
          </Viewport>
        </LeftPane>

        <EdgeRail>
          {railApps.map((Icon, i) => <RailSlot key={i}><Icon /></RailSlot>)}
          <RailRule />
          <RailSlot><PlusIcon /></RailSlot>
          <Grow />
          <RailSlot $h={60}><SnipIcon /></RailSlot>
          <RailRule $m="14px 0" />
          <RailSlot $h={60}><GearIcon /></RailSlot>
        </EdgeRail>
      </Body>

      <Taskbar>
        <Widget>
          <ReportIcon />
          <Lines><Label $size={24} $track={-0.15}>Upcoming</Label><Label $track={0.1} $color="#5c6066">Earnings</Label></Lines>
        </Widget>
        <StartIcon />
        <TaskSearch>
          <FindIcon />
          <Label $size={26} $color="#5a5d62">Search</Label>
          <Grow />
          <BearIcon />
        </TaskSearch>
        {apps.map(([Icon, state, shifted], i) => (
          <AppSlot key={i}>
            <AppTile $active={state === "active"}>
              {shifted ? <ChromeShift><Icon /></ChromeShift> : <Icon />}
              {state && <RunMark $wide={state === "active"} />}
            </AppTile>
          </AppSlot>
        ))}
        <Tray>
          <Line w={22} h={14} sw={2.4}><path d="M1.500 12L11 2L20.500 12" /></Line>
          <Spaced $left={36}><CloudIcon /></Spaced>
          <Spaced $left={31}><WifiIcon /></Spaced>
          <Spaced $left={16}><VolumeIcon /></Spaced>
          <Spaced $left={16}><BatteryIcon /></Spaced>
          <Lines $end $w={157}><Label>09.29</Label><Label $size={23.5} $track={-0.1}>27/02/2024</Label></Lines>
          <Spaced $left={18}><BellIcon /></Spaced>
        </Tray>
      </Taskbar>
    </Screen>
  );
}
